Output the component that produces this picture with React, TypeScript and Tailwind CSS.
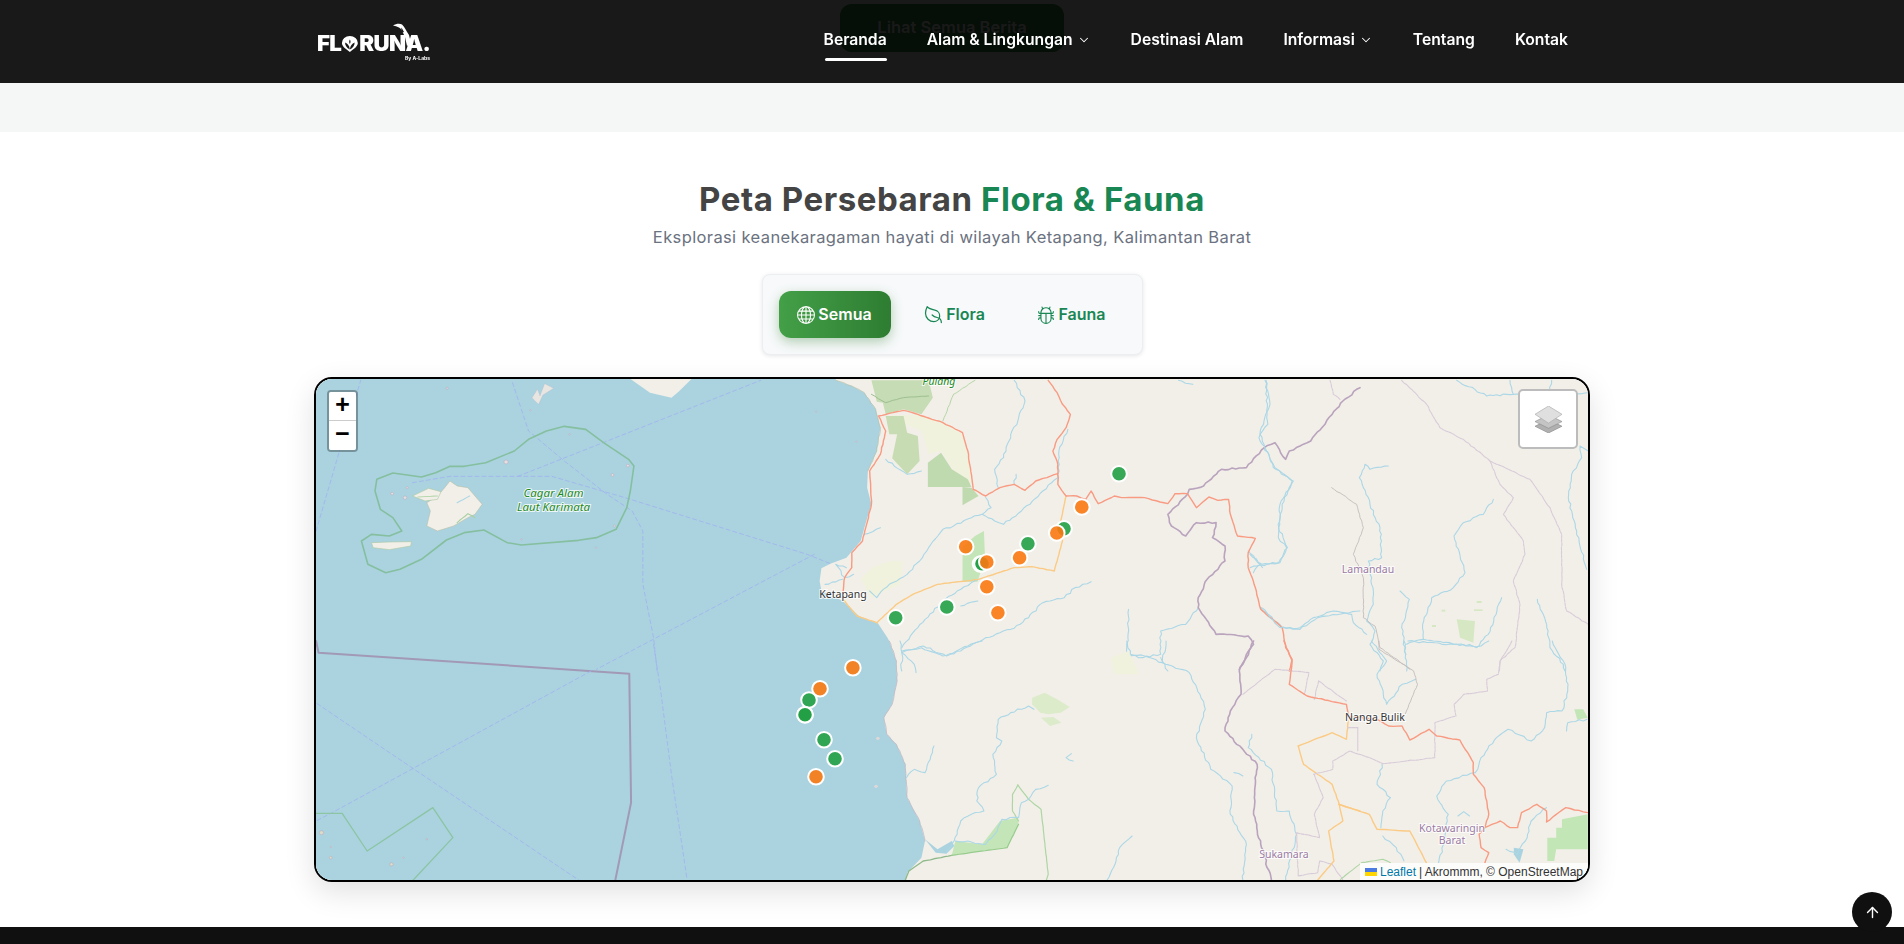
import { ChevronDown, ArrowUp, Leaf } from "lucide-react";
import { BsBug, BsGlobe } from "react-icons/bs";

const T = {
  z4: "translate(300 370) scale(.35714 .33333)",
  z5: "translate(800 370) scale(.35714 .33333)",
  z6: "translate(1200 370) scale(.33333 .33333)",
  z7: "translate(300 640) scale(.35714 .33333)",
  z8: "translate(800 640) scale(.35714 .33333)",
  z9: "translate(1300 640) scale(.38521 .33333)",
};

function wig(s: string, amp = 3, step = 10) {
  const pts = s.trim().split(/\s+/).map((p) => p.split(",").map(Number));
  const out: string[] = [];
  let seed = pts.length * 7 + (pts[0]?.[0] ?? 0);
  for (let i = 0; i < pts.length - 1; i++) {
    const [x0, y0] = pts[i];
    const [x1, y1] = pts[i + 1];
    const len = Math.hypot(x1 - x0, y1 - y0);
    const n = Math.max(1, Math.floor(len / step));
    for (let k = 0; k < n; k++) {
      const t = k / n;
      seed = (seed * 9301 + 49297) % 233280;
      const r = (seed / 233280 - 0.5) * 2 * amp * (k === 0 ? 0 : 1);
      out.push(`${(x0 + (x1 - x0) * t + (-(y1 - y0) / (len || 1)) * r).toFixed(1)},${(y0 + (y1 - y0) * t + ((x1 - x0) / (len || 1)) * r).toFixed(1)}`);
    }
  }
  out.push(pts[pts.length - 1].join(","));
  return out.join(" ");
}

const RIVER2 = "#abd7e6";
const ROAD = "#f89b82";
const ORANGE = "#fbcb85";
const BOUND = "#b9a3bd";
const THIN = "#d8cbd8";

type LineProps = { p: string; c: string; w?: number; a?: number; s?: number; d?: string };
function L({ p, c, w = 1.1, a = 3, s = 10, d }: LineProps) {
  return (
    <polyline
      points={a === 0 ? p : wig(p, a, s)}
      fill="none"
      stroke={c}
      strokeWidth={w}
      strokeLinejoin="round"
      strokeLinecap="round"
      strokeDasharray={d}
      vectorEffect="non-scaling-stroke"
    />
  );
}

const rivers: Record<keyof typeof T, string[]> = {
  z4: [],
  z5: [
    "600,28 630,90 610,150 590,190 570,260 545,295 555,350",
    "520,380 535,410 510,430 545,450 570,460 620,420 680,360 722,320",
    "605,310 600,340",
    "510,430 480,440 430,465 400,475 360,530 335,570 300,610 250,640 215,680 195,660",
    "815,632 770,650 740,680 680,695 640,740 590,775 520,800 450,840 400,855 340,830 285,840 285,900",
    "498,690 450,705",
    "500,625 440,660 400,690 330,770 290,820 285,830",
    "750,175 725,240 722,330",
    "1305,28 1310,160 1285,200 1330,290 1378,330 1350,400 1340,470 1365,530 1340,575 1260,590",
    "1255,540 1295,590",
    "920,715 915,850 960,860 1010,850 1010,780 1080,760 1115,710",
    "1010,860 1030,900",
    "1060,28 1100,40",
    "1568,720 1450,740 1400,775 1350,770 1290,710",
    "180,490 225,470",
    "240,265 300,310 340,300",
    "130,590 100,580 125,620 150,610",
    "70,640 120,625",
  ],
  z6: [
    "195,28 210,100 180,190 220,290 280,330 240,400 235,500 260,530 240,575 185,580 150,550",
    "180,580 160,605",
    "565,285 510,295 495,280 478,320 510,400 540,470 545,560 505,570 515,620 520,700 500,750 525,780 510,820 550,870 540,900",
    "600,660 628,685 605,770 620,870 620,900",
    "620,820 670,805 750,815 830,830 865,790 905,680",
    "670,805 668,760 695,680 760,650 795,605 762,495 790,455 850,430 880,385",
    "770,28 860,75 920,70 960,70 1165,65",
    "930,28 940,70",
    "1055,28 1050,60",
    "1165,240 1140,225 1145,260 1115,310 1105,380 1130,480 1160,595",
    "1012,685 1040,760 1050,830 1090,880 1095,900",
    "185,710 240,770 300,770 340,740 400,720 455,730 460,755 500,790",
  ],
  z7: [],
  z8: [
    "655,205 640,195 590,215 555,235 550,290 565,300 540,340 550,400 500,440 495,480 515,510 480,520 450,540 440,580 410,635",
    "695,433 660,445 640,475 620,485 612,530 565,535 545,580 520,610 470,600 435,600",
    "375,315 350,395 320,385 298,410",
    "280,0 285,35 320,70 325,95",
    "285,35 345,15 410,45 470,15 510,0",
    "915,0 925,40 965,45 1015,65 1090,95 1120,160 1135,205 1110,290 1150,385 1210,435 1205,520 1250,610 1240,717",
    "1025,0 1015,65",
    "930,585 895,620 885,660 860,717",
    "1265,280 1255,320 1320,385 1335,510 1370,510 1390,580 1360,717",
    "760,338 745,350 765,360",
    "1215,395 1240,405",
  ],
  z9: [
    "185,0 225,60 200,100 225,190 265,130 300,115",
    "270,0 275,40",
    "280,0 400,10 470,15 490,0",
    "655,0 690,80 695,150 680,210 640,215 635,260 600,300 540,265 510,290 470,350 455,395 380,420 355,465 385,520 375,600 360,665",
    "745,235 695,245 692,270",
    "213,370 200,430 235,470 215,510 210,560",
    "215,585 250,620 270,660",
    "640,500 600,540 585,600 565,640 535,625",
    "410,525 425,512 440,525",
  ],
};

const greens = [
  [1119, 472.7],
  [1064, 527.7],
  [1027.9, 542.7],
  [980.5, 563],
  [982, 562.7],
  [946.8, 606],
  [895.7, 616.7],
  [809, 699],
  [805, 713.7],
  [805, 713.7],
  [824, 738.7],
  [835, 757.7],
];
const oranges = [
  [1081.8, 506],
  [1056.8, 532],
  [965.7, 545.7],
  [1019.6, 556.7],
  [986.8, 561],
  [986.8, 585.7],
  [997.9, 611.7],
  [852.9, 666.7],
  [820, 687.7],
  [816, 775.7],
];

const haloText = { paintOrder: "stroke" as const, stroke: "rgba(255,255,255,.8)", strokeWidth: 2, fontFamily: "'Noto Sans', sans-serif" };

function MapArt() {
  return (
    <svg viewBox="316 378 1272 501" className="block h-full w-full">
      <rect x="316" y="378" width="1272" height="501" fill="#f2efe9" />
      <rect x="316" y="378" width="485" height="501" fill="#aad3df" />
      <g transform={T.z5}>
        <polygon fill="#aad3df" points="-2,0 100,0 100,28 145,45 180,65 212,115 225,170 215,240 190,300 188,350 200,400 183,460 170,510 130,560 85,578 60,592 55,630 60,660 120,690 165,735 218,757 245,800 250,811 -2,811" />
        <polygon fill="#c5dcb4" points="200,28 360,28 372,80 340,130 290,115 240,130 232,95 215,92" />
        <polygon fill="#f1f2de" points="240,135 330,130 400,155 455,190 475,270 485,340 455,340 395,240 360,250 340,180" />
        <polygon fill="#c8dcb4" points="240,135 290,135 300,185 330,195 335,270 300,310 258,262 272,190 250,190" />
        <polygon fill="#c0dab0" points="358,348 358,275 395,245 425,295 470,325 480,348 455,348" />
        <polygon fill="#c0dab0" points="455,403 455,348 480,350 500,375" />
        <polygon fill="#c4e5b7" points="455,632 455,528 490,495 515,480 518,560 497,632" />
        <polygon fill="#f1f2de" points="170,625 200,590 250,570 290,570 280,640 200,680" />
        <L p="100,28 145,45 180,65 212,115 225,170 215,240 190,300" c="#b8c0a8" w={0.7} a={1.5} />
        <L p="200,70 240,95 290,80 360,75" c="#9fbf90" w={1} a={1} />
        <L p="430,70 400,150" c="#b6d6a8" w={1} a={1} />
        <L p="430,70 490,28" c="#b6d6a8" w={1} a={1} />
        {rivers.z5.map((p, i) => <L key={i} p={p} c={RIVER2} />)}
        <L p="1568,50 1520,90 1490,130 1470,160 1430,210 1370,240 1360,265 1330,215 1300,230 1250,290 1180,295 1130,345 1090,355 1085,370 1030,430 1040,465 1080,495 1110,455 1165,455 1155,500 1190,525 1190,570 1140,625 1115,680 1115,710 1165,790 1255,795 1270,820 1250,860 1230,895" c={BOUND} w={1.6} a={2.5} />
        <L p="745,375 730,450 735,510 712,600 650,587 600,590 500,625 385,640 320,668 270,700 215,755" c={ORANGE} w={1.4} a={0.6} />
        <L p="215,755 160,735 120,685" c={ORANGE} w={1.4} a={0.6} />
        <L p="695,28 720,65 735,100 757,130 745,170 720,205 708,240 722,280 722,340 745,375 775,375 800,385 815,360 835,398 880,375 900,380 965,380 1030,398 1050,368 1085,368 1110,410 1145,378 1170,388 1200,385 1205,430 1225,495 1275,502 1255,545 1255,590 1275,650 1290,715 1350,770 1360,830 1378,865 1370,900" c={ROAD} w={1.4} a={1} />
        <L p="722,308 660,330 630,358 600,340 560,350 520,375 485,355 470,240 455,185 400,155 330,130 290,118 220,135 240,180 225,250 195,300 200,400 175,510 145,545 145,590 125,620 118,680" c={ROAD} w={1.4} a={1} />
      </g>
      <g transform={T.z8}>
        <polygon fill="#aad3df" points="-2,0 250,0 270,60 272,120 258,190 235,230 243,280 270,310 295,370 300,470 335,540 350,600 340,650 300,695 295,730 -2,730" />
        <polygon fill="#c4e5b7" points="435,600 510,610 560,540 610,530 612,550 580,620 425,643" />
        <polygon fill="#dcebca" points="650,170 685,155 720,175 755,198 730,215 695,220 673,215 650,190" />
        <polygon fill="#dcebca" points="675,230 710,228 732,245 700,255" />
        <polygon fill="#f1f2de" points="870,50 920,30 950,100 880,100" />
        <polygon fill="#aad3df" points="350,595 385,625 425,600 432,615 410,638 380,635" />
        <L p="250,0 270,60 272,120 258,190 235,230 243,280 270,310 295,370 300,470 335,540 350,600" c="#c4b9c2" w={0.8} a={1.5} />
        <L p="610,432 595,460 595,510 612,540" c="#aed5a4" w={1.2} a={0.5} />
        <L p="610,432 640,475 675,505 695,700 690,717" c="#aed5a4" w={1.2} a={0.5} />
        <L p="425,643 345,660 305,690 295,717" c="#8fb98a" w={1.3} a={0.8} />
        <L p="425,643 580,620 612,550" c="#98cc8e" w={1.2} a={0.5} />
        {rivers.z8.map((p, i) => <L key={i} p={p} c={RIVER2} />)}
        <L p="1270,0 1250,40 1230,90 1235,160 1205,210 1190,270 1280,370 1275,430 1270,520 1290,610 1320,717" c={BOUND} w={1.6} a={2.5} />
        <L p="1240,160 1330,85 1425,95 1412,160" c={THIN} d="3 1" a={1} />
        <L p="1452,120 1440,175" c={THIN} d="3 1" a={1} />
        <L p="1452,120 1530,180" c={THIN} d="3 1" a={1} />
        <L p="1440,400 1465,470 1440,520 1455,590 1390,575 1395,705 1450,695 1455,660 1490,670 1520,717" c={THIN} d="3 1" a={1} />
        <L p="1395,315 1490,275 1530,295 1535,240" c={ORANGE} w={1.4} a={0.6} />
        <L p="1395,315 1410,370 1490,430 1510,490 1520,540 1480,570 1495,660 1450,717" c={ORANGE} w={1.4} a={0.6} />
        <L p="1510,490 1568,510" c={ORANGE} w={1.4} a={0.6} />
        <L p="1355,0 1378,60 1370,130 1420,165 1530,190 1535,225" c={ROAD} w={1.4} a={1} />
      </g>
      <g transform={T.z6}>
        <polygon fill="#d5e8c3" points="770,745 825,750 820,815 780,800 775,770" />
        <polygon fill="#d5e8c3" points="830,690 845,690 845,696 830,696" />
        <polygon fill="#d5e8c3" points="822,715 848,715 848,720 822,720" />
        <polygon fill="#d5e8c3" points="725,716 736,716 736,722 725,722" />
        <polygon fill="#d5e8c3" points="696,762 708,762 708,768 696,768" />
        {rivers.z6.map((p, i) => <L key={i} p={p} c={RIVER2} />)}
        <L p="605,28 680,100 720,170 790,205 870,270 990,325 1050,410 1085,490 1085,640 1100,720 1165,760" c={THIN} a={1.5} d="3 1" />
        <L p="870,270 900,340 940,380 910,430 970,510 975,550 940,630 960,700 945,830 900,870 898,900" c={THIN} a={1.5} d="3 1" />
        <L p="390,28 400,70 420,85" c={THIN} a={1.5} d="3 1" />
        <L p="395,350 470,400 490,470 460,550 490,620 490,740 525,765 540,830 630,895" c="#c2bcba" w={0.9} a={1.5} />
      </g>
      <g transform={T.z9}>
        <polygon fill="#c3e6b7" points="642,660 642,590 665,590 665,560 680,560 680,535 747,520 747,625 665,625 660,660" />
        <polygon fill="#c3e6b7" points="712,205 735,205 747,230 720,236" />
        <polygon fill="#aad3df" points="555,620 580,625 570,665 555,640" />
        {rivers.z9.map((p, i) => <L key={i} p={p} c={RIVER2} />)}
        <L p="105,715 160,665 215,655 235,665" c="#aed5a4" a={0.5} />
        <L p="205,0 205,25 295,90 305,130 265,240" c="#c2bcba" w={0.9} a={1} />
        <L p="550,0 520,60 515,100 485,115 487,150 425,160 400,190 405,225 350,245 350,350 215,368 180,350 130,330 85,360 85,385 35,400" c={THIN} d="3 1" a={1} />
        <L p="150,260 150,330" c={THIN} d="3 1" a={0} />
        <L p="125,260 150,260" c={THIN} d="3 1" a={0} />
        <L p="100,490 180,520 200,565 285,570 328,665" c={ORANGE} w={1.4} a={0.6} />
        <L p="125,225 200,235 230,255 265,255 285,297 335,265 355,285 415,297 450,365 450,400 478,440 490,520 480,560 520,540 545,560 565,560 575,515 615,490 640,510 640,543 690,500 747,515" c={ROAD} w={1.4} a={1} />
        <L p="480,560 465,580 470,620 490,635 480,665" c={ROAD} w={1.4} a={0.6} />
      </g>
      <g transform={T.z4}>
        <polygon fill="#f2efe9" points="920,20 1100,20 1060,62 1040,80 980,65" />
        <polygon fill="#e9e6e2" stroke="#b9a9bd" strokeWidth=".6" points="650,80 665,55 672,75 685,38 710,52 680,72 668,100 655,86" />
        <L p="45,480 105,260 170,28" c="#a3b4ee" w={0.9} d="4 3" a={0} />
        <L p="595,35 640,180 740,270 860,370 930,420 960,480 960,640 990,800 1000,900" c="#a3b4ee" w={0.9} d="4 3" a={0} />
        <L p="315,335 420,316 705,316 910,380 1420,550 1490,580" c="#a3b4ee" w={0.9} d="4 3" a={0} />
        <L p="610,316 1290,28" c="#a3b4ee" w={0.9} d="4 3" a={0} />
        <L p="1440,550 830,895" c="#a3b4ee" w={0.9} d="4 3" a={0} />
        <polyline points="210,360 215,325 260,306 340,318 380,305 420,286 460,286 520,275 600,240 640,205 690,180 740,166 800,175 850,215 920,265 935,285 925,360 915,410 885,475 830,500 780,508 620,522 580,515 515,477 460,485 410,507 340,565 280,595 240,605 190,580 172,510 200,490 250,495 285,480 260,440 225,415 210,360" fill="none" stroke="#85bf9f" strokeWidth="1.6" strokeLinejoin="round" vectorEffect="non-scaling-stroke" />
        <polygon fill="#f2efe9" stroke="#b9c0a8" strokeWidth=".6" vectorEffect="non-scaling-stroke" points="420,330 440,345 470,350 490,375 510,400 490,430 470,440 430,465 385,480 355,465 365,420 355,395 385,375 405,350" />
        <polygon fill="#f2efe9" stroke="#a9c8a0" strokeWidth=".6" vectorEffect="non-scaling-stroke" points="315,375 360,352 395,362 385,385 350,390" />
        <polygon fill="#f2efe9" stroke="#a9c8a0" strokeWidth=".6" vectorEffect="non-scaling-stroke" points="200,515 250,513 312,512 310,525 250,536 205,530" />
        <L p="330,378 385,375" c="#b8d8b0" a={0.5} />
        <L p="440,455 470,428 490,440" c="#a8d0a0" a={0.5} />
        <L p="440,395 475,375" c={RIVER2} a={0.5} />
        {[[258,368,4],[294,380,5],[300,350,3],[577,273,6],[918,284,4],[875,312,4],[755,190,2],[620,505,2],[880,465,3],[829,530,2],[412,52,3],[645,118,2],[1445,122,2],[1558,212,2]].map(([x, y, r], i) => (
          <circle key={i} cx={x} cy={y} r={r} fill="#e4dfe0" stroke="#b9a5bb" strokeWidth=".5" vectorEffect="non-scaling-stroke" />
        ))}
      </g>
      <g transform={T.z7}>
        <L p="45,0 52,35 922,98 927,485 883,717" c="#a299b6" w={2} a={0} />
        <L p="815,90 90,515 45,540" c="#a3b4ee" w={0.9} d="4 3" a={0} />
        <L p="990,10 1010,150 1040,400 1083,710" c="#a3b4ee" w={0.9} d="4 3" a={0} />
        <L p="48,188 320,385 780,717" c="#a3b4ee" w={0.9} d="4 3" a={0} />
        <L p="45,517 118,517 188,630 372,500 428,590 317,717" c="#8cc4a4" w={1.3} a={0} />
        {[[60,575,6],[86,650,4],[256,670,5],[355,595,2],[290,650,2],[86,618,2]].map(([x, y, r], i) => (
          <circle key={i} cx={x} cy={y} r={r} fill="#dcdcc8" stroke="#b9a5bb" strokeWidth=".5" vectorEffect="non-scaling-stroke" />
        ))}
      </g>
      <g transform={T.z8}>
        <circle cx="218" cy="292" r="5" fill="#ded8d8" />
        <circle cx="213" cy="436" r="5" fill="#ded8d8" />
      </g>
      <g textAnchor="middle" fontSize="10.5">
        <text x="553.6" y="496" fill="#1f8a1f" fontStyle="italic" style={haloText} fontSize="11.5">Cagar Alam</text>
        <text x="553.6" y="510" fill="#1f8a1f" fontStyle="italic" style={haloText} fontSize="11.5">Laut Karimata</text>
        <text x="939" y="384" fill="#1f8a1f" fontStyle="italic" style={haloText}>Pulang</text>
        <text x="843" y="597" fill="#333" style={haloText}>Ketapang</text>
        <text x="1368" y="572" fill="#9b7ba3" style={haloText}>Lamandau</text>
        <text x="1375" y="719.5" fill="#333" style={haloText}>Nanga Bulik</text>
        <text x="1284" y="857" fill="#9b7ba3" style={haloText}>Sukamara</text>
        <text x="1452" y="830.5" fill="#9b7ba3" style={haloText}>Kotawaringin</text>
        <text x="1452" y="842.5" fill="#9b7ba3" style={haloText}>Barat</text>
      </g>
      {greens.map(([x, y], i) => (
        <circle key={i} cx={x} cy={y} r="7.8" fill="#22a045" fillOpacity=".9" stroke="#fff" strokeWidth="2" />
      ))}
      {oranges.map(([x, y], i) => (
        <circle key={i} cx={x} cy={y} r="7.8" fill="#f97912" fillOpacity=".9" stroke="#fff" strokeWidth="2" />
      ))}
    </svg>
  );
}

function Logo() {
  return (
    <div className="relative flex h-[38px] w-[114px] items-end pb-[9px] text-white">
      <div className="flex origin-left scale-x-[1.06] items-center font-['Inter',sans-serif] text-[21px] leading-[15px] font-black tracking-[-0.6px]">
        <span>FL</span>
        <svg viewBox="0 0 16 16" className="mx-[0.5px] h-[16px] w-[16px]">
          <path d="M8 16C3 12 .5 10 .5 7a7.5 7 0 0 1 15 0C15.500 10 13 12 8 16Z" fill="#fff" />
          <path d="M8 13.500C5 12 3.500 9.500 3.500 6.500 6 7.500 7.500 9.500 8 13.500ZM8 13.500C11 12 12.500 9.500 12.500 6.500 10 7.500 8.500 9.500 8 13.500ZM8 8C7 6.500 7.300 4.500 8 3.500 8.700 4.500 9 6.500 8 8Z" fill="#181818" />
        </svg>
        <span>RUNA.</span>
      </div>
      <svg viewBox="0 0 20 24" className="absolute top-0 left-[76px] h-[24px] w-[20px]">
        <path d="M0 2.500C3 .5 7 0 9 1.500 12 4 13 8 16 12L18 20 14 23 12 14C10 10 9 6 6 4.500 4 3.500 2 3 0 2.500Z" fill="#fff" />
        <path d="M8.500 4.500 11 9 9.500 9.500C8.500 8 8 6 8.500 4.500Z" fill="#181818" />
      </svg>
      <span className="absolute right-[1px] bottom-0 font-['Inter',sans-serif] text-[5px] leading-[6px] font-bold">By A-Labs</span>
    </div>
  );
}

function NavItem({ label, caret, active }: { label: string; caret?: boolean; active?: boolean }) {
  return (
    <a className="relative -mt-[4px] flex items-center gap-[4px] text-[15.7px] leading-6 font-semibold text-white">
      {label}
      {caret && <ChevronDown className="h-[14px] w-[14px]" strokeWidth={1.75} />}
      {active && <span className="absolute top-[30px] right-0 left-[1px] h-[3px] rounded-full bg-white" />}
    </a>
  );
}

export default function App() {
  return (
    <div className="relative min-h-[944px] bg-white font-['Inter',sans-serif]">
      <header className="fixed inset-x-0 top-0 z-20 h-[83px] bg-black/90">
        <div className="mx-auto flex h-full w-[1276px] items-center justify-between pr-[22px] pl-[3px]">
          <Logo />
          <nav className="flex items-center gap-10">
            <NavItem label="Beranda" active />
            <NavItem label="Alam & Lingkungan" caret />
            <NavItem label="Destinasi Alam" />
            <NavItem label="Informasi" caret />
            <NavItem label="Tentang" />
            <NavItem label="Kontak" />
          </nav>
        </div>
      </header>

      <section className="flex h-[132px] items-start justify-center bg-[#f5f7f6] pt-1">
        <a className="flex h-12 w-[224px] items-center justify-center rounded-xl bg-[#328a45] pb-[2px] text-[16.5px] font-semibold text-white">Lihat Semua Berita</a>
      </section>

      <section className="flex flex-col items-center pt-[43px] pb-[45px]">
        <h2 className="text-[33px] leading-[48px] font-bold tracking-[0.55px] text-[#444444]">
          Peta Persebaran <span className="text-[#198754]">Flora &amp; Fauna</span>
        </h2>
        <p className="mt-[2px] text-[16.5px] leading-6 tracking-[0.38px] text-[#6b7280]">Eksplorasi keanekaragaman hayati di wilayah Ketapang, Kalimantan Barat</p>
        <div className="mt-[25px] flex gap-4 rounded-lg border border-[#eceff1] bg-[#f7f9fa] p-4 shadow-[0_1px_4px_rgba(0,0,0,.1)]">
          <button className="flex h-[47px] w-[112px] items-center justify-center gap-[3px] rounded-xl bg-gradient-to-r from-[#43a047] to-[#2e7d32] pb-[2px] text-[16px] font-semibold text-white shadow-[0_4px_12px_rgba(46,125,50,.35)]">
            <BsGlobe className="mt-[2px] h-[18px] w-[18px]" />
            Semua
          </button>
          <button className="flex h-[47px] w-[95px] items-center justify-center gap-[3px] rounded-xl pb-[2px] text-[16px] font-semibold text-[#198754]">
            <Leaf className="mt-[2px] h-[20px] w-[20px] -scale-x-100" strokeWidth={1.5} />
            Flora
          </button>
          <button className="flex h-[47px] w-[108px] items-center justify-center gap-[3px] rounded-xl pb-[2px] text-[16px] font-semibold text-[#198754]">
            <BsBug className="mt-[2px] h-[18px] w-[18px]" />
            Fauna
          </button>
        </div>

        <div className="relative mt-[22px] h-[505px] w-[1276px] overflow-hidden rounded-[18px] border-2 border-black shadow-[0_10px_30px_rgba(0,0,0,.12)]">
          <MapArt />
          <div className="absolute top-[11px] left-[11px] flex w-[31px] flex-col overflow-hidden rounded-[4px] border-2 border-black/30 bg-clip-padding">
            <a className="flex h-[29px] items-center justify-center border-b border-[#ccc] bg-white font-['Liberation_Mono',monospace] text-[25px] leading-none font-bold text-black">+</a>
            <a className="flex h-[29px] items-center justify-center bg-white font-['Liberation_Mono',monospace] text-[25px] leading-none font-bold text-black">−</a>
          </div>
          <div className="absolute top-[10px] right-[10px] flex h-[60px] w-[60px] items-center justify-center rounded-[5px] border-2 border-[#bcbcbc] bg-white">
            <svg viewBox="0 0 26 26" className="h-[27px] w-[27px]">
              <path d="M13 13 26 19.500 13 26 0 19.500Z" fill="#b0b0b0" stroke="#8a8a8a" strokeWidth=".6" />
              <path d="M13 8.500 26 15 13 21.500 0 15Z" fill="#c4c4c4" stroke="#8a8a8a" strokeWidth=".6" />
              <path d="M13 0 26 8 13 16.500 0 8Z" fill="#dfdfdf" stroke="#a8a8a8" strokeWidth=".6" />
            </svg>
          </div>
          <div className="absolute right-0 bottom-0 flex h-[17px] items-center gap-[3px] bg-white/80 pr-[5px] pl-[5px] font-['Liberation_Sans',sans-serif] text-[12px] leading-none text-[#333]">
            <svg viewBox="0 0 12 8" className="h-2 w-3">
              <rect width="12" height="4" fill="#4c7be1" />
              <rect y="4" width="12" height="4" fill="#ffd500" />
            </svg>
            <span className="text-[#0078a8]">Leaflet</span>
            <span>| Akrommm, © OpenStreetMap</span>
          </div>
        </div>
      </section>

      <footer className="h-[18px] bg-[#101010]" />

      <a className="fixed right-3 bottom-3 z-30 flex h-10 w-10 items-center justify-center rounded-full bg-[#101010] text-white">
        <ArrowUp className="h-[17px] w-[17px]" strokeWidth={2} />
      </a>
    </div>
  );
}
